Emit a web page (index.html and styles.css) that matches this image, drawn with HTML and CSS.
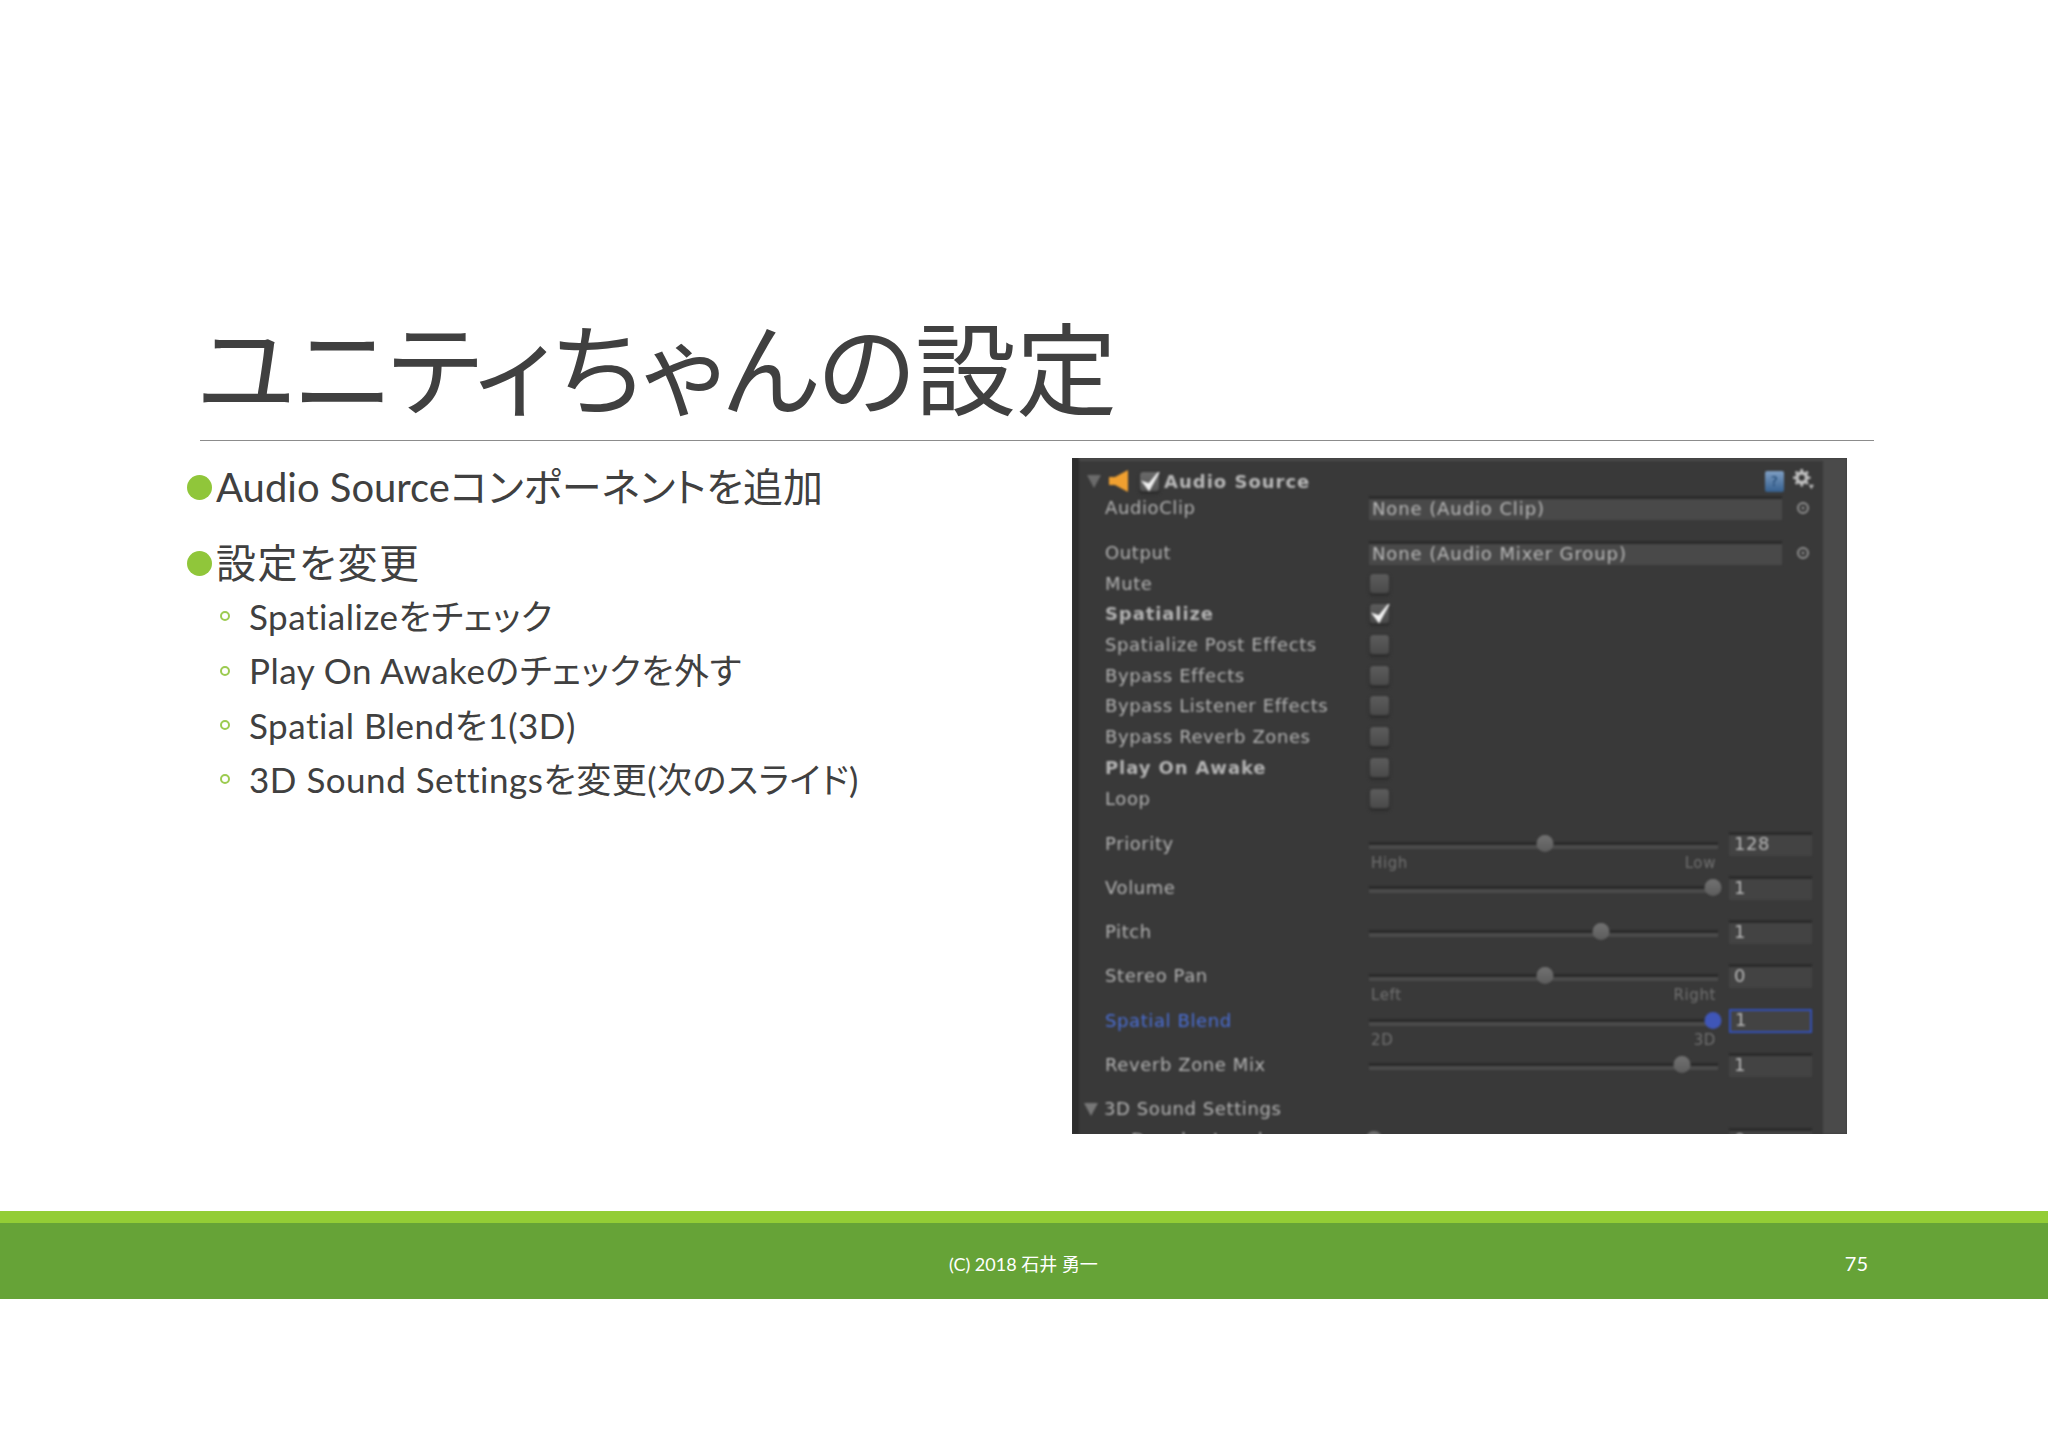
FILE: index.html
```html
<!DOCTYPE html>
<html lang="ja">
  <head>
    <meta charset="UTF-8" />
    <title>ユニティちゃんの設定</title>
    <link rel="stylesheet" href="styles.css">
  </head>
  <body>
    <div class="slide">
      <header class="title-area">
        <h1 class="title">ユニティちゃんの設定</h1>
      </header>

      <div class="content">
        <ul class="points">
          <li class="point">Audio Sourceコンポーネントを追加</li>
          <li class="point point-gap">設定を変更</li>
          <li class="sub">Spatializeをチェック</li>
          <li class="sub">Play On Awakeのチェックを外す</li>
          <li class="sub">Spatial Blendを1(3D)</li>
          <li class="sub">3D Sound Settingsを変更(次のスライド)</li>
        </ul>

        <div class="inspector">
          <div class="inspector-body">
            <!-- component header -->
            <div class="head">
              <span class="fold"></span>
              <svg class="speaker" viewBox="0 0 20 24"><path d="M0 8h6L19 1v22L6 16H0z" fill="#f0a030"/></svg>
              <span class="check check-head"><svg viewBox="0 0 20 20"><path d="M3 10l6 8L19 0 9 12z" fill="#f0f0f0" stroke="#f0f0f0" stroke-width="1.500"/></svg></span>
              <span class="head-name">Audio Source</span>
              <span class="head-tools">
                <span class="help">?</span>
                <svg class="gear" viewBox="0 0 24 24">
                  <circle cx="10" cy="10" r="5.500" fill="none" stroke="#bdbdbd" stroke-width="4"/>
                  <path d="M10 0v4M10 16v4M0 10h4M16 10h4M3 3l3 3M14 14l3 3M17 3l-3 3M6 14l-3 3" stroke="#bdbdbd" stroke-width="3"/>
                  <path d="M18 18h6l-3 5z" fill="#bdbdbd"/>
                </svg>
              </span>
            </div>

            <div class="row row-field">
              <span class="label">AudioClip</span>
              <span class="field">None (Audio Clip)</span>
              <span class="picker"></span>
            </div>
            <div class="row row-output">
              <span class="label">Output</span>
              <span class="field">None (Audio Mixer Group)</span>
              <span class="picker"></span>
            </div>

            <div class="row"><span class="label">Mute</span><span class="check"></span></div>
            <div class="row">
              <span class="label label-bold">Spatialize</span>
              <span class="check"><svg viewBox="0 0 20 20"><path d="M3 10l6 8L19 0 9 12z" fill="#f4f4f4" stroke="#f4f4f4" stroke-width="1.500"/></svg></span>
            </div>
            <div class="row"><span class="label">Spatialize Post Effects</span><span class="check"></span></div>
            <div class="row"><span class="label">Bypass Effects</span><span class="check"></span></div>
            <div class="row"><span class="label">Bypass Listener Effects</span><span class="check"></span></div>
            <div class="row"><span class="label">Bypass Reverb Zones</span><span class="check"></span></div>
            <div class="row"><span class="label label-bold">Play On Awake</span><span class="check"></span></div>
            <div class="row row-last"><span class="label">Loop</span><span class="check"></span></div>

            <div class="row row-slider">
              <span class="label">Priority</span>
              <div class="slider">
                <div class="track"><span class="thumb" style="left: 50.4%"></span></div>
                <div class="scale"><span>High</span><span>Low</span></div>
              </div>
              <span class="num">128</span>
            </div>
            <div class="row row-slider">
              <span class="label">Volume</span>
              <div class="slider">
                <div class="track"><span class="thumb" style="left: 98.6%"></span></div>
              </div>
              <span class="num">1</span>
            </div>
            <div class="row row-slider">
              <span class="label">Pitch</span>
              <div class="slider">
                <div class="track"><span class="thumb" style="left: 66.5%"></span></div>
              </div>
              <span class="num">1</span>
            </div>
            <div class="row row-slider">
              <span class="label">Stereo Pan</span>
              <div class="slider">
                <div class="track"><span class="thumb" style="left: 50.4%"></span></div>
                <div class="scale"><span>Left</span><span>Right</span></div>
              </div>
              <span class="num">0</span>
            </div>
            <div class="row row-slider row-active">
              <span class="label">Spatial Blend</span>
              <div class="slider">
                <div class="track"><span class="thumb" style="left: 98.6%"></span></div>
                <div class="scale"><span>2D</span><span>3D</span></div>
              </div>
              <span class="num">1</span>
            </div>
            <div class="row row-slider">
              <span class="label">Reverb Zone Mix</span>
              <div class="slider">
                <div class="track"><span class="thumb" style="left: 89.7%"></span></div>
              </div>
              <span class="num">1</span>
            </div>

            <div class="row"><span class="label label-fold"><span class="fold"></span>3D Sound Settings</span></div>
            <div class="row row-slider">
              <span class="label label-indent">Doppler Level</span>
              <div class="slider">
                <div class="track"><span class="thumb" style="left: 1.5%"></span></div>
              </div>
              <span class="num">0</span>
            </div>
          </div>
        </div>
      </div>

      <footer class="footer">
        <div class="footer-line"></div>
        <div class="footer-bar">
          <span class="copy">(C) 2018 石井 勇一</span>
          <span class="page-no">75</span>
        </div>
      </footer>
    </div>
  </body>
</html>
```

FILE: styles.css
```css
body {
  margin: 0;
  background-color: #fff;
  color: #404040;
  font-family: Lato, "Noto Sans CJK JP", sans-serif;
  font-feature-settings: "palt";
}
.slide {
  height: 1448px;
  overflow: hidden;
}

/* title */
.title-area {
  height: 440px;
  margin: 0 174px 0 200px;
  border-bottom: 1px solid #8c8c8c;
  display: flex;
  align-items: flex-end;
}
.title {
  margin: 0 0 16px -3px;
  font-size: 101px;
  font-weight: 400;
  line-height: 110px;
  white-space: nowrap;
}

.content {
  display: flex;
  justify-content: space-between;
  height: 753px;
  margin-top: 17px;
  padding: 0 201px 0 187px;
}

/* bullets */
.points {
  list-style: none;
  margin: 0;
  padding: 3px 0 0;
}
.point {
  display: flex;
  align-items: center;
  gap: 4px;
  font-size: 40px;
  line-height: 52px;
}
.point::before {
  content: "";
  width: 25px;
  height: 25px;
  border-radius: 50%;
  background-color: #90c63a;
}
.point-gap {
  margin-top: 24px;
  letter-spacing: 1.5px;
}
.sub {
  display: flex;
  align-items: center;
  gap: 19px;
  margin-left: 33px;
  font-size: 35px;
  letter-spacing: 0.5px;
  line-height: 54.4px;
}
.sub::before {
  content: "";
  width: 6px;
  height: 6px;
  border: 2px solid #9ccb50;
  border-radius: 50%;
}

/* unity inspector picture */
.inspector {
  width: 775px;
  height: 676px;
  overflow: hidden;
  background-color: #393939;
}
.inspector-body {
  height: 676px;
  box-sizing: border-box;
  padding: 8px 11px 0 26px;
  border-left: 7px solid #2d2d2d;
  border-right: 24px solid #4a4a4a;
  box-shadow: inset 0 3px 0 #4a4a4a;
  color: #b3b3b3;
  font-family: "DejaVu Sans", sans-serif;
  font-size: 18px;
  letter-spacing: 0.6px;
  filter: blur(0.8px);
}
.head {
  display: flex;
  align-items: center;
  height: 30px;
}
.fold {
  width: 0;
  height: 0;
  margin-left: -18px;
  margin-right: 8px;
  border-left: 7px solid transparent;
  border-right: 7px solid transparent;
  border-top: 13px solid #6b6b6b;
}
.speaker {
  width: 20px;
  height: 24px;
  margin-right: 10px;
}
.check {
  width: 21px;
  height: 21px;
  margin-top: 1px;
  box-sizing: border-box;
  border-radius: 4px;
  background: linear-gradient(#5c5c5c, #4a4a4a);
  border: 1px solid #333;
  box-shadow: 0 2px 2px #2c2c2c;
  display: block;
}
.check svg {
  display: block;
  width: 20px;
  height: 20px;
}
.check-head {
  margin-top: 0;
  background: linear-gradient(#6a6a6a, #555);
}
.head-name {
  margin-left: 4px;
  font-weight: 700;
  font-size: 18px;
  letter-spacing: 1px;
  color: #b8b8b8;
}
.head-tools {
  margin-left: auto;
  display: flex;
  align-items: center;
  gap: 9px;
}
.help {
  width: 19px;
  height: 21px;
  border-radius: 2px;
  background: linear-gradient(#7f9fc4, #35608f);
  color: #1f4570;
  font-size: 14px;
  line-height: 21px;
  text-align: center;
}
.gear {
  width: 21px;
  height: 21px;
  margin-top: -4px;
  margin-right: -2px;
}

.row {
  display: grid;
  grid-template-columns: 264px 349px 94px;
  height: 30.7px;
  line-height: 24px;
  align-items: start;
}
.row-field {
  height: 45px;
  grid-template-columns: 264px 413px 30px;
}
.row-output {
  grid-template-columns: 264px 413px 30px;
}
.row-last {
  height: 45px;
}
.row-slider {
  height: 44.3px;
}
.label {
  white-space: nowrap;
}
.label-bold {
  font-weight: 700;
  letter-spacing: 0.9px;
}
.label-fold {
  display: flex;
  align-items: center;
}
.label-fold .fold {
  margin-left: -21px;
  margin-right: 6px;
  border-top-color: #777;
}
.label-indent {
  padding-left: 26px;
}
.field {
  height: 24px;
  box-sizing: border-box;
  padding-left: 3px;
  background-color: #494949;
  border-top: 3px solid #2b2b2b;
  letter-spacing: 0.9px;
  line-height: 20px;
  color: #b9b9b9;
}
.picker {
  width: 8px;
  height: 8px;
  margin: 6px 0 0 15px;
  border: 2px solid #8f8f8f;
  border-radius: 50%;
  background: radial-gradient(circle, #8f8f8f 0 22%, #393939 30%);
}
.track {
  position: relative;
  height: 3px;
  margin-top: 10px;
  background-color: #2a2a2a;
  border-bottom: 4px solid #4b4b4b;
}
.thumb {
  position: absolute;
  top: -7px;
  width: 17px;
  height: 17px;
  border-radius: 50%;
  background: linear-gradient(#727272, #5c5c5c);
  transform: translateX(-50%);
}
.scale {
  display: flex;
  justify-content: space-between;
  margin-top: 5px;
  padding: 0 2px;
  font-size: 15px;
  line-height: 18px;
  color: #727272;
}
.num {
  height: 24px;
  box-sizing: border-box;
  margin-left: 11px;
  width: 83px;
  padding-left: 5px;
  background-color: #434343;
  border-top: 3px solid #2b2b2b;
  line-height: 18px;
  color: #b9b9b9;
}
.row-active .label {
  color: #4a6fd8;
}
.row-active .thumb {
  background: #3f56b8;
}
.row-active .num {
  border: 2px solid #3350b8;
  padding-left: 4px;
}

/* footer */
.footer-line {
  height: 12px;
  background-color: #93cd35;
}
.footer-bar {
  display: flex;
  justify-content: space-between;
  align-items: center;
  height: 76px;
  box-sizing: border-box;
  padding: 3px 180px 0 949px;
  background-color: #66a337;
  color: #fff;
}
.copy {
  font-size: 18px;
}
.page-no {
  font-size: 20px;
}
```
